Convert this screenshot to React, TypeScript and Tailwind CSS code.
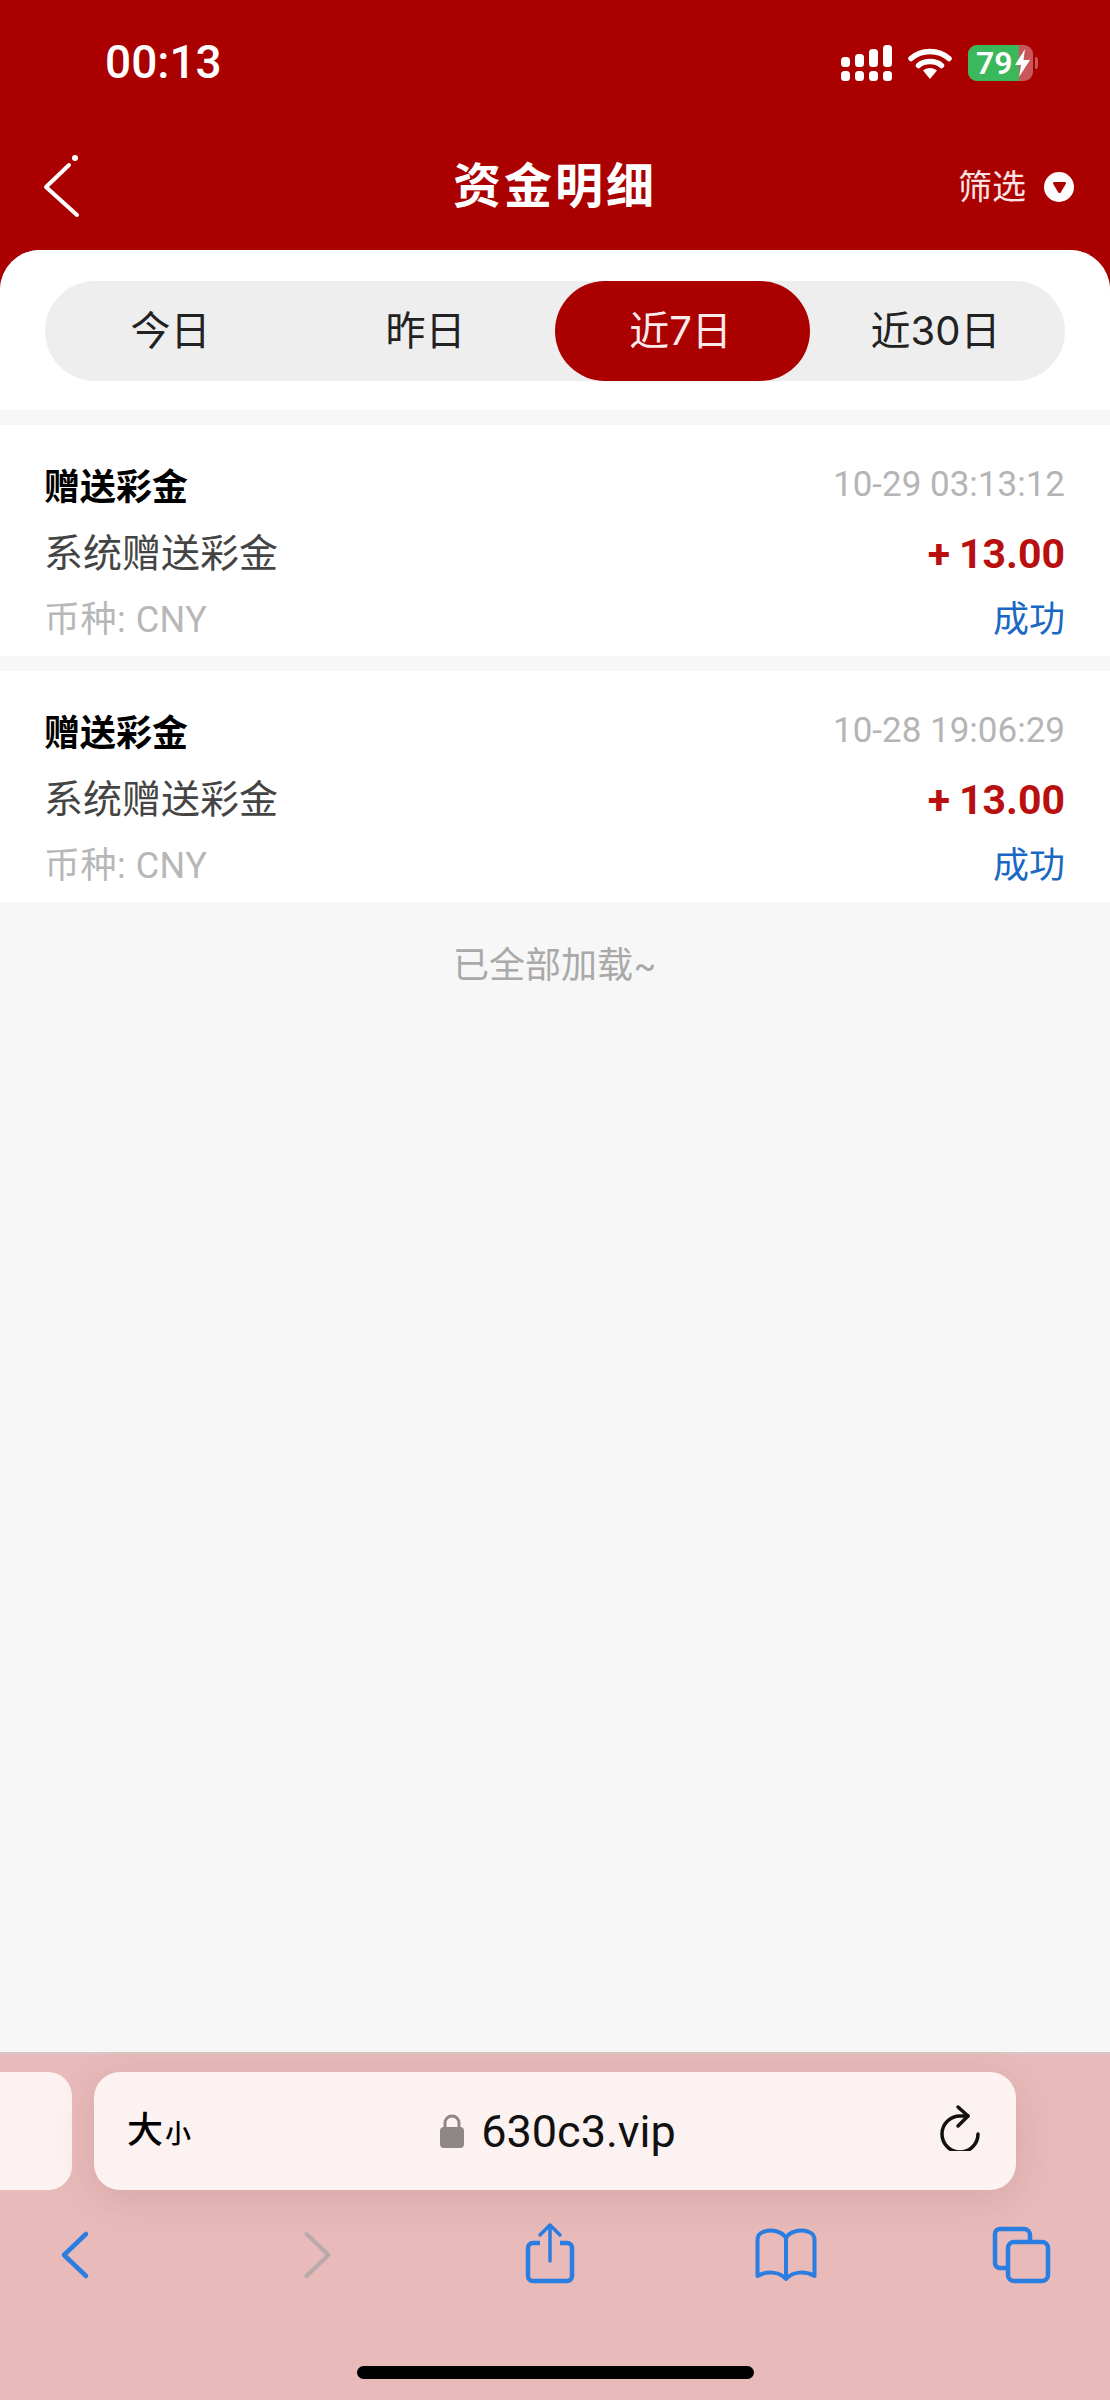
import React from 'react';

const records = [
  { time: '10-29 03:13:12', amount: '13.00' },
  { time: '10-28 19:06:29', amount: '13.00' },
];

const tabs = ['今日', '昨日', '近7日', '近30日'];

const SignalIcon = () => (
  <svg width="51" height="36" viewBox="0 0 51 36" fill="#fff">
    <rect x="0" y="26" width="9" height="10" rx="3.5" />
    <rect x="14" y="26" width="9" height="10" rx="3.5" />
    <rect x="28" y="26" width="9" height="10" rx="3.5" />
    <rect x="42" y="26" width="9" height="10" rx="3.5" />
    <rect x="0" y="12" width="9" height="10" rx="3.5" />
    <rect x="14" y="9" width="9" height="13" rx="3.5" />
    <rect x="28" y="4" width="9" height="18" rx="3.5" />
    <rect x="42" y="0" width="9" height="22" rx="3.5" />
  </svg>
);

const WifiIcon = () => (
  <svg width="44" height="32" viewBox="0 0 44 32" fill="none">
    <path d="M3 11.500C13.500 2 30.500 2 41 11.500" stroke="#fff" strokeWidth="5.500" strokeLinecap="round" />
    <path d="M10.500 18.500C16.500 13.200 27.500 13.200 33.500 18.500" stroke="#fff" strokeWidth="5.500" strokeLinecap="round" />
    <path d="M15 23.500C19 20 25 20 29 23.500L22 32Z" fill="#fff" />
  </svg>
);

const Battery = () => (
  <div className="flex items-center">
    <div className="relative w-[65px] h-[36px] rounded-[9px] overflow-hidden bg-[#c9565a]">
      <div className="h-full w-[51px] bg-[#3bb85c]" />
      <div className="absolute inset-0 flex items-center pl-[8px] text-[32px] leading-none font-semibold text-white font-['Roboto','Noto_Sans_CJK_SC',sans-serif]">
        79
        <svg width="17" height="28" viewBox="0 0 17 28" fill="#fff" className="ml-[1px]">
          <path d="M11 0 1 16h6l-2 12L16 11H9.500Z" />
        </svg>
      </div>
    </div>
    <div className="ml-[2px] w-[3px] h-[12px] rounded-r-full bg-[#c9565a]" />
  </div>
);

const Row = ({ time, amount }: { time: string; amount: string }) => (
  <div className="bg-white pl-[44px] pr-[45px] pt-[40px] h-[231px]">
    <div className="flex items-center justify-between h-[44px]">
      <span className="text-[36px] leading-[44px] font-semibold text-black">赠送彩金</span>
      <span className="text-[35px] leading-[44px] text-[#b5b5b5] -mt-[5px] font-['Roboto',sans-serif]">{time}</span>
    </div>
    <div className="flex items-center justify-between h-[44px] mt-[22px]">
      <span className="text-[39px] leading-[44px] text-[#444444]">系统赠送彩金</span>
      <span className="text-[41px] leading-[44px] mt-[2px] font-bold text-[#b90f0f] font-['Roboto',sans-serif]">
        <span className="mr-[9px]">+</span>
        {amount}
      </span>
    </div>
    <div className="flex items-center justify-between h-[44px] mt-[22px]">
      <span className="text-[36px] leading-[44px] mt-[2px] tracking-[0.5px] text-[#b7b7b7] font-['Roboto','Noto_Sans_CJK_SC',sans-serif]">币种: CNY</span>
      <span className="text-[36px] leading-[44px] text-[#1a68c4]">成功</span>
    </div>
  </div>
);

export default function App() {
  return (
    <div className="w-[1110px] h-[2400px] flex flex-col overflow-hidden bg-[#ab0000] font-['Inter','Noto_Sans_CJK_SC',sans-serif]">
      {/* status bar */}
      <div className="h-[126px] pl-[105px] pr-[72px] pt-[39px] flex items-start justify-between">
        <span className="text-[46px] leading-[46px] font-medium text-white font-['Roboto',sans-serif]">00:13</span>
        <div className="flex items-center gap-[16px] pt-[6px]">
          <SignalIcon />
          <WifiIcon />
          <Battery />
        </div>
      </div>

      {/* nav */}
      <div className="h-[124px] relative flex items-center justify-center">
        <svg width="44" height="64" viewBox="0 0 44 64" fill="none" className="absolute left-[41px] top-[28px]">
          <path d="M28 11 5 33 36 61" stroke="#fff" strokeWidth="4" strokeLinecap="round" strokeLinejoin="round" />
          <circle cx="34" cy="4" r="3" fill="#fff" />
        </svg>
        <span className="text-[48px] leading-none font-bold text-white tracking-[3px] -mt-[5px]">资金明细</span>
        <div className="absolute right-[36px] top-0 bottom-0 -mt-[2px] flex items-center gap-[18px]">
          <span className="text-[34px] leading-none text-[#fbe3e3]">筛选</span>
          <div className="w-[30px] h-[30px] rounded-full bg-white flex items-center justify-center">
            <svg width="15" height="13" viewBox="0 0 16 14">
              <path d="M1 2.500C1 1.500 1.800 1 2.700 1h10.600c.9 0 1.700.5 1.700 1.500 0 .4-.1.8-.4 1.100L9.300 12.300c-.7.900-1.900.9-2.600 0L1.400 3.600C1.100 3.300 1 2.900 1 2.500Z" fill="#ab0000" />
            </svg>
          </div>
        </div>
      </div>

      {/* content */}
      <div className="flex-1 flex flex-col bg-[#f7f7f7] rounded-t-[40px] overflow-hidden">
        <div className="bg-white h-[160px] pt-[31px] px-[45px]">
          <div className="grid grid-cols-4 h-[100px] rounded-[50px] bg-[#eeeeee]">
            {tabs.map((tab, i) => (
              <div
                key={tab}
                className={`flex items-center justify-center text-[40px] leading-none pr-[4px] ${
                  i === 2 ? 'rounded-[50px] bg-[#ab0000] text-[#fbeaea]' : 'text-[#222222]'
                }`}
              >
                {tab}
              </div>
            ))}
          </div>
        </div>
        <div className="flex flex-col gap-[15px] pt-[15px]">
          {records.map((r) => (
            <Row key={r.time} time={r.time} amount={r.amount} />
          ))}
        </div>
        <div className="pt-[39px] text-center text-[36px] leading-[48px] text-[#a9a9a9]">已全部加载~</div>
      </div>

      {/* safari toolbar */}
      <div className="h-[348px] border-t-2 border-[#d9c5c5] bg-[#e8baba] relative">
        <div className="flex gap-[22px] pt-[18px]">
          <div className="w-[72px] h-[118px] rounded-r-[24px] bg-[#fcf2f1]" />
          <div className="w-[922px] h-[118px] rounded-[26px] bg-[#fcf2f1] shadow-[0_8px_40px_rgba(120,60,60,0.14)] relative flex items-center justify-center pl-[6px]">
            <div className="absolute left-[33px] top-[40px] flex items-baseline text-black font-medium leading-none">
              <span className="text-[36px]">大</span>
              <span className="text-[26px] ml-[2px]">小</span>
            </div>
            <svg width="24" height="34" viewBox="0 0 24 34" className="mr-[17px]">
              <path d="M5 15V9a7 7 0 0 1 14 0v6" fill="none" stroke="#8f8787" strokeWidth="3" />
              <rect x="0" y="13" width="24" height="21" rx="4" fill="#8f8787" />
            </svg>
            <span className="text-[45px] leading-none text-[#111111] font-['Roboto',sans-serif]">630c3.vip</span>
            <svg width="40" height="48" viewBox="0 0 40 48" fill="none" className="absolute right-[36px] top-[31px]">
              <path d="M28 13H20A18 18 0 1 0 38 31" stroke="#111" strokeWidth="3.500" strokeLinecap="round" />
              <path d="M18 4 28 13 18 23" stroke="#111" strokeWidth="3.500" strokeLinecap="round" strokeLinejoin="round" />
            </svg>
          </div>
        </div>
        <div className="flex justify-between pl-[45px] pr-[59px] pt-[31px]">
          <svg width="60" height="64" viewBox="0 0 60 64" fill="none">
            <path d="M41 13 19 34 41 55" stroke="#2a7de1" strokeWidth="4.500" strokeLinecap="round" strokeLinejoin="round" />
          </svg>
          <svg width="60" height="64" viewBox="0 0 60 64" fill="none">
            <path d="M24.500 13 46.500 34 24.500 55" stroke="#b9a9a9" strokeWidth="4" strokeLinecap="round" strokeLinejoin="round" />
          </svg>
          <svg width="60" height="64" viewBox="0 0 60 64" fill="none">
            <path d="M22 22h-7a5 5 0 0 0-5 5v28a5 5 0 0 0 5 5h34a5 5 0 0 0 5-5V27a5 5 0 0 0-5-5h-7" stroke="#2a7de1" strokeWidth="4.500" />
            <path d="M32 40V4M22 14 32 4 42 14" stroke="#2a7de1" strokeWidth="3.500" strokeLinecap="round" strokeLinejoin="round" />
          </svg>
          <svg width="60" height="64" viewBox="0 0 60 64" fill="none" className="overflow-visible">
            <path d="M31 17C27 10 17 8 8 11 4 12.500 2.500 14.500 2.500 19V55C11 50 24 50 31 58 38 50 51 50 59.500 55V19C59.500 14.500 58 12.500 54 11 45 8 35 10 31 17ZM31 17V58" stroke="#2a7de1" strokeWidth="4" strokeLinejoin="round" />
          </svg>
          <svg width="60" height="64" viewBox="0 0 60 64" fill="none">
            <rect x="17" y="21" width="40" height="39" rx="6" stroke="#2a7de1" strokeWidth="4.500" />
            <path d="M15 47H9a5 5 0 0 1-5-5V13a5 5 0 0 1 5-5h24a6 6 0 0 1 6 6v6" stroke="#2a7de1" strokeWidth="4.500" />
          </svg>
        </div>
        <div className="absolute left-[357px] bottom-[21px] w-[397px] h-[13px] rounded-full bg-black" />
      </div>
    </div>
  );
}
